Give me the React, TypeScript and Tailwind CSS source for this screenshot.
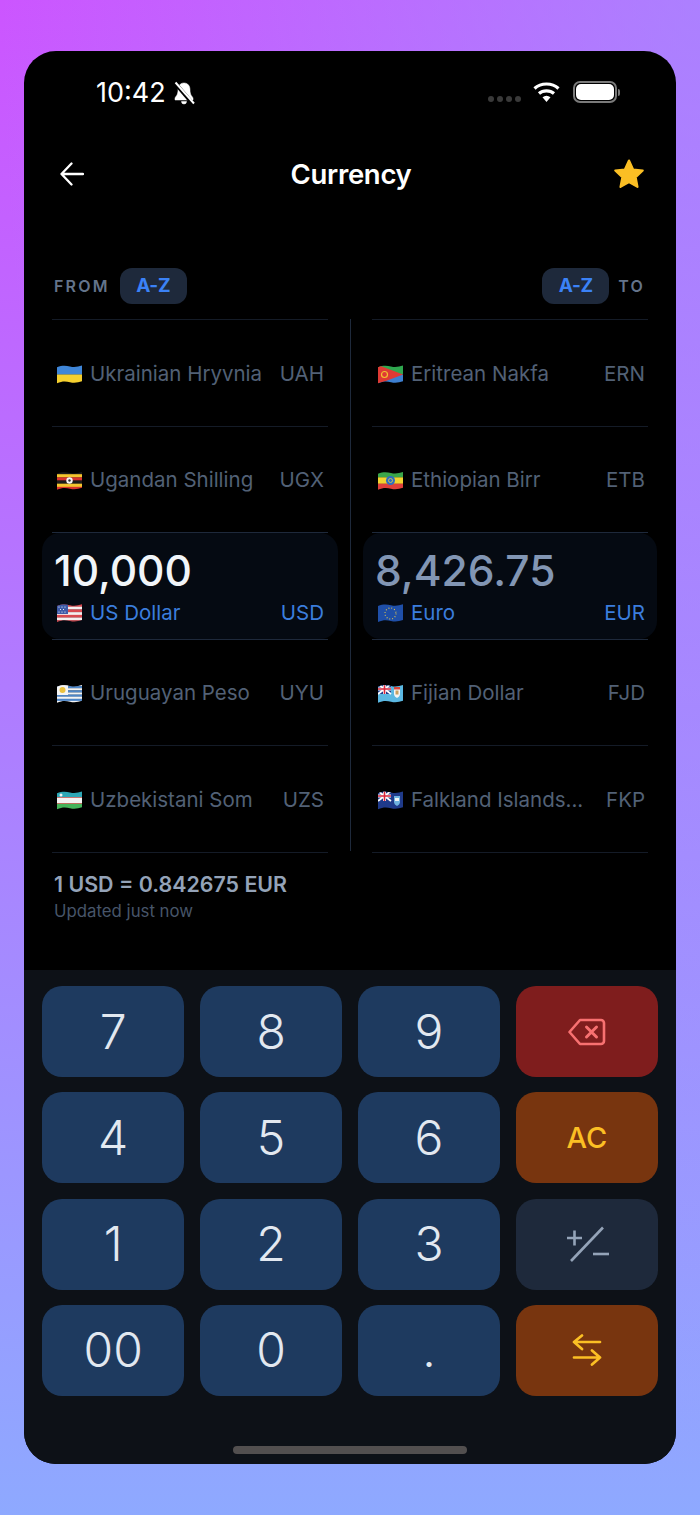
import type { ReactNode } from "react";

type Currency = { flag: ReactNode; name: string; code: string };

/* ---------------- FLAGS ---------------- */
const wave = "M0 2.500C5 0.500 9 0.800 13 1.800C17 2.800 21 2.200 25 0.800V16.500C21 18 17 18.500 13 17.500C9 16.500 5 16.300 0 18.500Z";

function Flag({ children }: { children: ReactNode }) {
  return (
    <svg width="25" height="19" viewBox="0 0 25 19" className="shrink-0" style={{ clipPath: `path("${wave}")` }}>
      {children}
    </svg>
  );
}

const Stripes = ({ colors }: { colors: string[] }) => (
  <>
    {colors.map((c, i) => (
      <rect key={i} x="0" y={(19 / colors.length) * i} width="25" height={19 / colors.length + 0.2} fill={c} />
    ))}
  </>
);

const UnionJack = () => (
  <g>
    <rect width="13" height="10" fill="#1f3a8a" />
    <path d="M0 0L13 10M13 0L0 10" stroke="#fff" strokeWidth="1.800" />
    <path d="M6.500 0V10M0 5H13" stroke="#fff" strokeWidth="3" />
    <path d="M6.500 0V10M0 5H13" stroke="#d9263b" strokeWidth="1.600" />
  </g>
);

const flags: Record<string, ReactNode> = {
  UAH: <Flag><Stripes colors={["#3f86d8", "#f5d02f"]} /></Flag>,
  UGX: (
    <Flag>
      <Stripes colors={["#1c1c1c", "#f4c52e", "#d8332e", "#1c1c1c", "#f4c52e", "#d8332e"]} />
      <circle cx="12.500" cy="9.500" r="3.200" fill="#f5f5f5" />
      <circle cx="12.500" cy="9.500" r="1.200" fill="#333" />
    </Flag>
  ),
  USD: (
    <Flag>
      <Stripes colors={["#d8484f", "#f5eeee", "#d8484f", "#f5eeee", "#d8484f", "#f5eeee", "#d8484f"]} />
      <rect width="11" height="10" fill="#3d5aa8" />
      <path d="M2 3h.01M5 3h.01M8 3h.01M3.500 5.500h.01M6.500 5.500h.01M2 8h.01M5 8h.01M8 8h.01" stroke="#fff" strokeWidth="1.200" strokeLinecap="round" />
    </Flag>
  ),
  ERN: (
    <Flag>
      <rect width="25" height="9.500" fill="#2fa84f" />
      <rect y="9.500" width="25" height="9.500" fill="#3d7fd0" />
      <path d="M0 0L25 9.500L0 19Z" fill="#df3a34" />
      <circle cx="6.500" cy="9.500" r="3" fill="none" stroke="#f2c230" strokeWidth="1.200" />
    </Flag>
  ),
  ETB: (
    <Flag>
      <Stripes colors={["#3aa64a", "#f2d32f", "#e0403a"]} />
      <circle cx="12.500" cy="9.500" r="4.500" fill="#2f6fc0" />
      <circle cx="12.500" cy="9.500" r="2" fill="none" stroke="#e8d040" strokeWidth="0.800" />
    </Flag>
  ),
  EUR: (
    <Flag>
      <rect width="25" height="19" fill="#1f4fa8" />
      <circle cx="12.500" cy="9.500" r="5.500" fill="none" stroke="#e8cb4a" strokeWidth="1.100" strokeDasharray="0.900 2" />
    </Flag>
  ),
  UYU: (
    <Flag>
      <Stripes colors={["#f4f4f4", "#4d86c8", "#f4f4f4", "#4d86c8", "#f4f4f4", "#4d86c8", "#f4f4f4", "#4d86c8", "#f4f4f4"]} />
      <rect width="11" height="11" fill="#f4f4f4" />
      <circle cx="5.500" cy="6" r="3" fill="#ecc23f" />
    </Flag>
  ),
  FJD: (
    <Flag>
      <rect width="25" height="19" fill="#5bb8e2" />
      <UnionJack />
      <path d="M16 3h6v7c0 2-1.500 3-3 4c-1.500-1-3-2-3-4Z" fill="#f4f4f4" />
      <rect x="16" y="3" width="6" height="2.500" fill="#d9463b" />
      <rect x="17.500" y="6.500" width="3" height="4" fill="#c9a060" />
    </Flag>
  ),
  UZS: (
    <Flag>
      <rect width="25" height="6.300" fill="#2ea7b5" />
      <rect y="6.300" width="25" height="6.400" fill="#f4f4f4" />
      <rect y="12.700" width="25" height="6.300" fill="#45b45a" />
      <rect y="6" width="25" height="0.600" fill="#d9463b" />
      <rect y="12.400" width="25" height="0.600" fill="#d9463b" />
      <circle cx="4" cy="4" r="1.500" fill="#f4f4f4" />
    </Flag>
  ),
  FKP: (
    <Flag>
      <rect width="25" height="19" fill="#1f3a8a" />
      <UnionJack />
      <path d="M16 5h6v6c0 2-1.500 3-3 4c-1.500-1-3-2-3-4Z" fill="#6fb2e0" />
      <path d="M17 7h4v3h-4Z" fill="#f4f4f4" />
    </Flag>
  ),
};

const fromList: Currency[] = [
  { flag: flags.UAH, name: "Ukrainian Hryvnia", code: "UAH" },
  { flag: flags.UGX, name: "Ugandan Shilling", code: "UGX" },
  { flag: flags.USD, name: "US Dollar", code: "USD" },
  { flag: flags.UYU, name: "Uruguayan Peso", code: "UYU" },
  { flag: flags.UZS, name: "Uzbekistani Som", code: "UZS" },
];

const toList: Currency[] = [
  { flag: flags.ERN, name: "Eritrean Nakfa", code: "ERN" },
  { flag: flags.ETB, name: "Ethiopian Birr", code: "ETB" },
  { flag: flags.EUR, name: "Euro", code: "EUR" },
  { flag: flags.FJD, name: "Fijian Dollar", code: "FJD" },
  { flag: flags.FKP, name: "Falkland Islands...", code: "FKP" },
];

/* ---------------- ROWS ---------------- */
function Row({ item, isTo, line }: { item: Currency; isTo: boolean; line: string }) {
  return (
    <div
      className={`flex h-[106.500px] items-center justify-between border-b pt-[3px] text-[20.500px] text-[#526176] ${line} ${
        isTo ? "pl-[6px] pr-[3px]" : "pl-[5px] pr-[4px]"
      }`}
    >
      <div className="flex items-center gap-[8px]">
        {item.flag}
        <span className="whitespace-nowrap">{item.name}</span>
      </div>
      <span>{item.code}</span>
    </div>
  );
}

function ActiveRow({ item, value, valueColor, isTo }: { item: Currency; value: string; valueColor: string; isTo: boolean }) {
  return (
    <div className="h-[106.500px] border-b border-[#1e293b]">
      <div
        className={`flex h-full flex-col rounded-[18px] bg-[#050a12] pt-[13px] ${
          isTo ? "-mx-[9px] pl-[12px] pr-[12px]" : "-mx-[10px] pl-[12px] pr-[14px]"
        }`}
      >
        <div className={`text-[42.500px] leading-[50px] font-medium ${valueColor}`}>{value}</div>
        <div className="mt-[2px] flex items-center justify-between pl-[3px] text-[20.500px] leading-[30px] text-[#3b7ddd]">
          <div className="flex items-center gap-[8px]">
            {item.flag}
            <span>{item.name}</span>
          </div>
          <span>{item.code}</span>
        </div>
      </div>
    </div>
  );
}

function Column({ items, value, valueColor, isTo }: { items: Currency[]; value: string; valueColor: string; isTo: boolean }) {
  return (
    <div className="w-[276px] border-t border-[#141b27]">
      <Row item={items[0]} isTo={isTo} line="border-[#141b27]" />
      <Row item={items[1]} isTo={isTo} line="border-[#1e293b]" />
      <ActiveRow item={items[2]} value={value} valueColor={valueColor} isTo={isTo} />
      <Row item={items[3]} isTo={isTo} line="border-[#141b27]" />
      <Row item={items[4]} isTo={isTo} line="border-[#141b27]" />
    </div>
  );
}

function Pill() {
  return (
    <div className="flex h-[36px] w-[67px] items-center justify-center rounded-[12px] bg-[#1e293b] text-[19px] font-bold tracking-[-0.3px] text-[#3b82f6]">
      A-Z
    </div>
  );
}

/* ---------------- KEYPAD ---------------- */
const digitKey = "bg-[#1e3a5f] text-[#e2e8f0]";

function Key({ className, children }: { className: string; children: ReactNode }) {
  return (
    <div className={`flex h-[91px] items-center justify-center rounded-[20px] text-[48px] font-[350] ${className}`}>
      {children}
    </div>
  );
}

const BackspaceIcon = () => (
  <svg width="38" height="28" viewBox="0 0 38 28" fill="none" stroke="#f87171" strokeWidth="2.600" strokeLinecap="round" strokeLinejoin="round">
    <path d="M12 2H33a3 3 0 0 1 3 3V23a3 3 0 0 1-3 3H12L1.500 14Z" />
    <path d="M18.500 9L28.500 19M28.500 9L18.500 19" strokeWidth="3" />
  </svg>
);

const PlusMinusIcon = () => (
  <svg width="44" height="36" viewBox="0 0 44 36" fill="none" stroke="#94a3b8" strokeWidth="2.600">
    <path d="M6 35L38 1.500" />
    <path d="M2 12H17M9.500 4.500V19.500" />
    <path d="M28 28H44" />
  </svg>
);

const SwapIcon = () => (
  <svg width="30" height="32" viewBox="0 0 30 32" fill="none" stroke="#fbbf24" strokeWidth="2.700" strokeLinecap="round" strokeLinejoin="round">
    <path d="M2 8H28M10 1.500L2 8L10 15" />
    <path d="M28 23.500H2M20 16.500L28 23.500L20 30.500" />
  </svg>
);

/* ---------------- PAGE ---------------- */
export default function App() {
  return (
    <div className="h-[1515px] w-[700px] bg-[radial-gradient(ellipse_700px_1515px_at_100%_0%,rgba(142,169,255,0.51),transparent),linear-gradient(180deg,#cc55ff,#8ea9ff)] px-[24px] pt-[51px] font-['Inter',sans-serif]">
      <div className="flex h-[1413px] flex-col overflow-hidden rounded-[32px] bg-black">
        {/* Status bar */}
        <div className="flex h-[97px] shrink-0 items-start justify-between pl-[72px] pr-[56px] pt-[26px]">
          <div className="flex items-center gap-[6px] text-[27px] leading-[32px] text-white">
            <span>10:42</span>
            <svg width="24" height="24" viewBox="0 0 24 24" fill="#fff" stroke="#fff">
              <path d="M12 2c4 0 6 3 6 7c0 5 2 6 3 8v2H3v-2c1-2 3-3 3-8c0-4 2-7 6-7Z" strokeWidth="0.500" />
              <path d="M9.500 20.500a2.500 2.500 0 0 0 5 0Z" strokeWidth="0.500" />
              <path d="M3 2L21 23" stroke="#000" strokeWidth="4" />
              <path d="M3.500 1.500L22 22.500" strokeWidth="2" />
            </svg>
          </div>
          <div className="flex items-center gap-[11px] pt-[4px]">
            <div className="mt-[14px] flex gap-[3px]">
              <span className="h-[6px] w-[6px] rounded-full bg-[#3a3a3a]" />
              <span className="h-[6px] w-[6px] rounded-full bg-[#3a3a3a]" />
              <span className="h-[6px] w-[6px] rounded-full bg-[#3a3a3a]" />
              <span className="h-[6px] w-[6px] rounded-full bg-[#3a3a3a]" />
            </div>
            <svg width="29" height="22" viewBox="0 0 27 22" fill="none" stroke="#fff" strokeWidth="3.200">
              <path d="M1.500 7.500C8 1.500 19 1.500 25.500 7.500" />
              <path d="M6 12.500C10 9 17 9 21 12.500" />
              <path d="M13.500 21L9.500 16.300C12 14.300 15 14.300 17.500 16.300Z" fill="#fff" stroke="none" />
            </svg>
            <div className="ml-[1px] flex items-center gap-[1px]">
              <div className="flex h-[22px] w-[44px] items-center rounded-[7px] border-2 border-[#7a7a7a] p-[1px]">
                <div className="h-full w-full rounded-[5px] bg-white" />
              </div>
              <div className="h-[7px] w-[2px] rounded-r-full bg-[#777]" />
            </div>
          </div>
        </div>

        {/* Header */}
        <div className="relative flex h-[52px] shrink-0 items-center justify-center pt-[1px]">
          <svg className="absolute left-[36px] top-[14px]" width="24" height="24" viewBox="0 0 24 24" fill="none" stroke="#fff" strokeWidth="2.300" strokeLinecap="round" strokeLinejoin="round">
            <path d="M23 12H1.500M11.500 1.500L1.500 12L11.500 22.500" />
          </svg>
          <span className="ml-[2px] text-[27.500px] font-semibold tracking-[-0.3px] text-white">Currency</span>
          <svg className="absolute right-[30px] top-[9px]" width="34" height="34" viewBox="0 0 24 24" fill="#fbbf24" stroke="#fbbf24" strokeWidth="1.500" strokeLinejoin="round">
            <path d="M12 2.500l2.900 6.300 6.800.8-5 4.700 1.300 6.800-6-3.400-6 3.400 1.300-6.800-5-4.700 6.800-.8Z" />
          </svg>
        </div>

        {/* From / To labels */}
        <div className="mt-[68px] flex h-[36px] shrink-0 items-center justify-between pl-[30px] pr-[31px] text-[16px] font-semibold tracking-[2.200px] text-[#64748b]">
          <div className="flex items-center gap-[10px]">
            <span>FROM</span>
            <Pill />
          </div>
          <div className="flex items-center gap-[9px]">
            <Pill />
            <span>TO</span>
          </div>
        </div>

        {/* Columns */}
        <div className="mt-[15px] flex shrink-0 justify-between px-[28px]">
          <Column items={fromList} value="10,000" valueColor="text-[#f1f5f9]" isTo={false} />
          <div className="h-[532px] w-px bg-[#1e293b]" />
          <Column items={toList} value="8,426.75" valueColor="text-[#8296b4]" isTo />
        </div>

        {/* Rate */}
        <div className="mt-[18px] pl-[30px]">
          <div className="text-[21.400px] leading-[26px] font-semibold text-[#94a3b8]">1 USD = 0.842675 EUR</div>
          <div className="mt-[3px] text-[16.800px] leading-[22px] text-[#475569]">Updated just now</div>
        </div>

        {/* Keypad */}
        <div className="relative mt-auto h-[494px] shrink-0 bg-[#0d1117] px-[18px] pt-[16px]">
          <div className="grid grid-cols-4 gap-x-[15.500px] gap-y-[15.330px]">
            <Key className={digitKey}>7</Key>
            <Key className={digitKey}>8</Key>
            <Key className={digitKey}>9</Key>
            <Key className="bg-[#7f1d1d]"><BackspaceIcon /></Key>
            <Key className={digitKey}>4</Key>
            <Key className={digitKey}>5</Key>
            <Key className={digitKey}>6</Key>
            <Key className="bg-[#78350f]"><span className="text-[29px] font-medium text-[#fbbf24]">AC</span></Key>
            <Key className={digitKey}>1</Key>
            <Key className={digitKey}>2</Key>
            <Key className={digitKey}>3</Key>
            <Key className="bg-[#1e293b]"><PlusMinusIcon /></Key>
            <Key className={digitKey}>00</Key>
            <Key className={digitKey}>0</Key>
            <Key className={digitKey}>.</Key>
            <Key className="bg-[#78350f]"><SwapIcon /></Key>
          </div>
          <div className="absolute bottom-[10px] left-[209px] h-[8px] w-[234px] rounded-full bg-[#524f4f]" />
        </div>
      </div>
    </div>
  );
}
